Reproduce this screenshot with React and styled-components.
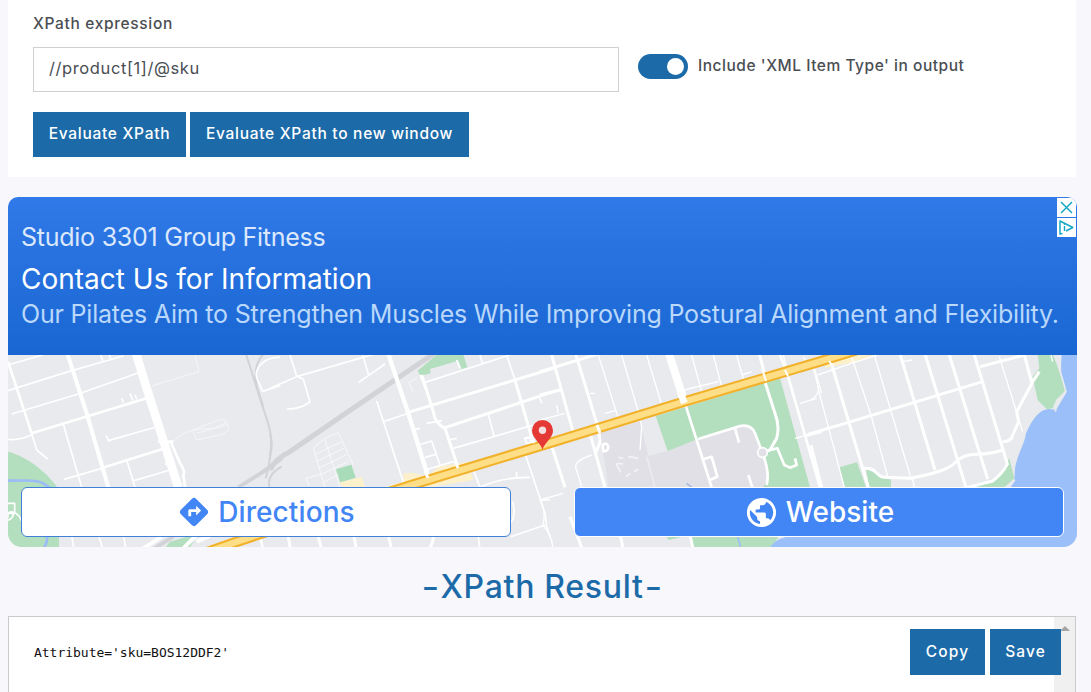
import React from "react";
import styled, { createGlobalStyle } from "styled-components";
import { MdDirections, MdPublic } from "react-icons/md";

const GlobalStyle = createGlobalStyle`
  * { box-sizing: border-box; }
  html, body { margin: 0; height: 692px; overflow: hidden; }
  body { background: #f7f7fc; font-family: Inter, "Liberation Sans", sans-serif; }
`;

const Page = styled.main`
  height: 692px;
  padding: 0 15px 0 8px;
  overflow: hidden;
`;

const FormCard = styled.section`
  height: 177px;
  padding: 12px 25px 0;
  background: #fff;
`;

const Label = styled.label`
  display: block;
  height: 24px;
  font-size: 15.5px;
  font-weight: 500;
  line-height: 24px;
  color: #4a4e53;
  white-space: nowrap;
  letter-spacing: ${(p) => p.$track || "0"};
`;

const FieldRow = styled.div`
  display: flex;
  margin-top: 11px;
`;

const Input = styled.input`
  width: 586px;
  height: 45px;
  padding: 0 15px 3px;
  border: 1px solid #cfd0d2;
  border-radius: 0;
  background: #fff;
  color: #4a4e53;
  font: 400 16.5px Inter, "Liberation Sans", sans-serif;
  letter-spacing: 0.6px;
  outline: none;
`;

const ToggleField = styled.div`
  display: flex;
  gap: 10px;
  margin: 7px 0 0 19px;
`;

const Toggle = styled.span`
  display: flex;
  justify-content: flex-end;
  align-items: center;
  width: 50px;
  height: 25px;
  padding-right: 4px;
  border-radius: 13px;
  background: #1c6ba8;
`;

const Knob = styled.span`
  width: 17px;
  height: 17px;
  border-radius: 50%;
  background: #fff;
`;

const ButtonRow = styled.div`
  display: flex;
  gap: 4px;
  margin-top: 20px;
`;

const Button = styled.button`
  width: ${(p) => p.$w}px;
  height: ${(p) => p.$h || 45}px;
  padding: 0 0 2px;
  border: 0;
  background: #1c6ba8;
  color: #fff;
  font: 500 15.5px Inter, "Liberation Sans", sans-serif;
  letter-spacing: ${(p) => p.$track || "0.72px"};
  white-space: nowrap;
`;

const Ad = styled.section`
  position: relative;
  width: 1069px;
  height: 350px;
  margin-top: 20px;
  border-radius: 10px 10px 14px 14px;
  overflow: hidden;
`;

const AdCopy = styled.div`
  height: 158px;
  padding: 23px 13px 0;
  background: linear-gradient(#3079e8, #1966d2);
  white-space: nowrap;
`;

const Advertiser = styled.div`
  font-size: 25px;
  line-height: 34px;
  color: #dce8fb;
  letter-spacing: -0.25px;
`;

const AdTitle = styled.div`
  margin-top: 5px;
  font-size: 28px;
  line-height: 40px;
  color: #fff;
`;

const AdText = styled.div`
  margin-top: -1px;
  font-size: 25px;
  line-height: 32px;
  color: #b9d8fb;
  letter-spacing: -0.2px;
`;

const AdBadges = styled.div`
  position: absolute;
  top: 1px;
  right: 1px;
  display: flex;
  flex-direction: column;
  gap: 1px;
`;

const Badge = styled.span`
  display: flex;
  width: 19px;
  height: 19px;
  background: #fff;
`;

const MapArea = styled.div`
  position: relative;
  height: 192px;
  overflow: hidden;
`;

const MapSvg = styled.svg`
  display: block;
  width: 1069px;
  height: 192px;
`;

const AdActions = styled.div`
  position: absolute;
  top: 132px;
  left: 13px;
  right: 13px;
  display: flex;
  justify-content: space-between;
`;

const AdLink = styled.a`
  display: flex;
  align-items: center;
  justify-content: center;
  gap: ${(p) => p.$gap}px;
  width: 490px;
  height: 50px;
  border: 1px solid ${(p) => (p.$solid ? "#fff" : "#4180d8")};
  border-radius: 6px;
  background: ${(p) => (p.$solid ? "#4285f4" : "#fff")};
  color: ${(p) => (p.$solid ? "#fff" : "#4285f4")};
  font-size: 28px;
  font-weight: 500;
  letter-spacing: ${(p) => p.$track};
`;

const ResultTitle = styled.h2`
  height: 69px;
  margin: 0;
  padding-top: 19px;
  text-align: center;
  font-size: 32px;
  font-weight: 500;
  line-height: 42px;
  color: #1c6ba8;
  letter-spacing: 0.7px;
`;

const Dash = styled.span`
  display: inline-block;
  margin: 0 2px;
  transform: scaleX(1.2);
`;

const ResultBox = styled.section`
  position: relative;
  display: flex;
  justify-content: space-between;
  height: 120px;
  border: 1px solid #c9c9ce;
  background: #fff;
`;

const Output = styled.pre`
  margin: 0;
  padding: 27px 25px;
  font: 13px/18px "DejaVu Sans Mono", monospace;
  letter-spacing: -0.02px;
  color: #111;
`;

const ScrollTrack = styled.div`
  width: 21px;
  padding: 9px 0 0 6px;
  background: #f0f0f0;
`;

const ScrollArrow = styled.span`
  display: block;
  width: 0;
  border: solid transparent;
  border-width: 0 5px 5px;
  border-bottom-color: #a3a3a3;
`;

const ResultActions = styled.div`
  position: absolute;
  top: 12px;
  right: 14px;
  display: flex;
  gap: 5px;
`;

/* The map is authored in four sheets at triple scale, placed side by side. */
const SHEETS = [
  {
    x: 0,
    areas: [
      ["#b4dfbf", "M24 305C85 320 150 375 177 420V600H24Z"],
      ["#b4dfbf", "M490 600L510 575 560 560 590 560 565 600Z"],
    ],
    lines: [
      ["#9bbcf5", 8, "M24 391C60 394 110 386 130 400L165 425M142 555Q143 580 128 600"],
      ["#d2d3d7", 6, "M738 12L780 145C800 210 820 250 812 300Q810 340 797 385M790 12Q755 50 772 115L790 170"],
      ["#d2d3d7", 12, "M715 412L790 365 845 325M455 600L520 560"],
      ["#d2d3d7", 6, "M845 350Q800 375 808 412"],
      ["#f5f6f7", 3, "M585 15L597 65 455 108M520 275Q540 250 575 242L650 212Q685 200 685 235 680 250 660 255L590 270 578 240 640 235 680 218M590 250L680 225"],
      ["#fff", 5, "M24 122L205 65 370 18M24 45L130 14M35 192L235 132 420 67M302 14L308 32M328 14L332 27M365 145L370 158M390 130L398 151M405 134L410 148M318 256L328 276M325 272L468 231M190 223L245 412M192 388L305 355M380 330L405 412M402 392L510 360M95 250L110 300 143 327M24 268Q55 272 95 255M840 22C790 20 755 60 775 95L788 124 840 107M215 555L222 600M295 555L310 600M370 555L378 600"],
      ["#fff", 8, "M24 35L95 250 440 145M308 353L495 295M475 275L520 275M495 342L520 342M512 275L540 340Q557 365 550 375L555 412"],
      ["#fff", 12, "M203 14L260 190 325 412M430 595L485 560M545 600L590 555M590 575L630 557"],
      ["#fff", 26, "M408 10L440 115 535 412"],
      ["#fff", 5, "M24 460H44V490H24M24 505Q20 480 42 487 60 495 65 515M24 511Q40 505 40 490"],
      ["#fff", 7, "M780 560L790 600"],
    ],
  },
  {
    x: 270,
    areas: [
      ["#b4dfbf", "M443 62L500 14H580L592 52 575 57 565 32 480 57 482 70 452 78Z"],
      ["#a8dcb9", "M198 358L244 344 257 383 211 398Z"],
      ["#fcf1cb", "M210 397L275 380 285 412H215ZM400 370L430 368 470 380 505 350 595 335 610 390 480 412 340 412 400 395Z"],
    ],
    lines: [
      ["#d2d3d7", 15, "M490 12L230 188 60 305Q15 325 0 360"],
      ["#d2d3d7", 6, "M0 250Q10 285 0 318"],
      ["#fff", 5, "M0 115L80 80 355 0M60 15L80 78 100 88 120 156Q90 178 50 177M278 15L296 75M265 98L345 42M320 153L405 412M340 215L415 190M435 238L450 235M445 285L485 273 510 345M465 322L498 313M465 97L720 15M450 75L475 135 482 165M470 220L515 212M535 270L560 265M550 295L790 225M655 193L672 258M710 15L735 90M465 360L550 335M630 15L637 40M560 30L570 55M810 145L815 160M610 360L630 412M765 310L825 490 830 530 840 560M630 412Q700 380 780 382M740 365V385M722 560L825 525M625 560L630 600M815 450H840M728 455Q740 500 720 520"],
      ["#f8f8f9", 3, "M130 295Q165 260 205 248M130 295L165 412M165 270L210 412M205 248L250 345M132 315L215 275M138 335L222 295M145 355L228 315M150 375L235 335M108 385L155 372M108 385L118 408M155 400L205 375M415 95L430 125M440 85L420 95"],
      ["#fff", 9, "M415 187L735 90 850 55M455 75L490 185Q495 220 525 235L565 355M525 233L760 155 850 125M735 90L790 280"],
      ["#fff", 13, "M355 12L415 190 475 383"],
      ["#fff", 9, "M55 560L62 600M145 560L155 600M252 560L260 600M355 555L365 600M490 560Q490 580 475 600"],
      ["#fff", 6, "M765 265L780 262 785 278 770 280Z"],
    ],
  },
  {
    x: 540,
    areas: [
      ["#e1e0e6", "M180 245L300 215 325 318 380 303 470 270 610 230 640 240 690 350 670 412H205Z"],
      ["#b4dfbf", "M347 198L720 84 810 412H670L685 380 665 310 635 235 610 228 475 267 383 303Z"],
      ["#b4dfbf", "M380 560H420L425 561 385 570ZM450 555H720L690 600H460Z"],
      ["#9bbff9", "M685 600Q705 560 760 558H850V600Z"],
    ],
    lines: [
      ["#eeeef1", 4, "M320 320L345 412"],
      ["#f3f3f6", 5, "M235 322L250 325M228 340L242 367M232 340L250 342M265 320L295 325M258 380L270 370M282 365L295 358"],
      ["#fff", 4, "M155 315Q95 335 110 360L125 410M0 450L70 430M0 450Q20 490 8 525 40 560 38 600M0 210L75 190M50 165L55 190M195 190L225 182M150 130H165M175 15L235 205M245 15L295 185 305 230 300 300M320 15L365 165M455 15L487 133M520 15L545 110M432 120L535 95M590 15L612 95M605 75L635 65M730 15L740 55M790 20L805 45M820 45L845 130M780 160L830 145M765 265L790 258"],
      ["#fff", 9, "M0 65L180 10M0 135L60 120M35 15L100 248M108 15L175 235M175 235L180 275 165 315M658 12L675 75M670 80L705 190Q720 230 710 265L690 300 665 308M150 250L195 412M35 288L75 412M90 500L128 600M240 550L250 600M450 555L460 600"],
      ["#fff", 8, "M435 160L515 412M475 267L600 228Q635 222 645 250L668 310M668 310Q690 370 680 405M585 235L597 278M625 375L637 412M490 328L515 320 532 380 510 390M690 300L712 295 733 345 750 353 770 345 765 325M188 285Q200 275 205 290 205 305 190 304ZM740 65L840 412M720 15L740 65"],
      ["#fff", 24, "M385 5L433 155"],
      ["#9bbff9", 5, "M593 560L602 590"],
      ["#a9bcd8", 5, "M440 400L455 412"],
      ["#fff", 8, "M795 258L845 245"],
    ],
  },
  {
    x: 811,
    areas: [
      ["#fcf1cb", "M60 15H200L120 38 40 55Z"],
      ["#9bbff9", "M752 10H800V600H0V560H500L610 395 612 355C620 310 640 285 645 250C665 205 685 178 715 177L735 180 765 130 748 70Z"],
      ["#b4dfbf", "M680 10H725L765 120 735 150 725 175 708 178 680 150 665 80 685 55Z"],
      ["#b4dfbf", "M85 352L138 337 165 412H102ZM165 357L240 390V412H175ZM495 412L560 380 595 325 610 385 580 412Z"],
    ],
    lines: [
      ["#fff", 4, "M0 150Q30 130 20 105L8 55M20 75L120 40 200 15M20 110L100 412M120 15L180 195 230 380M190 15L300 385M275 35L303 30M565 20L635 245M720 15L725 35M303 380L310 412"],
      ["#fff", 9, "M-10 253L110 218 515 95M58 30L172 412M0 285L32 412M268 15L372 360M343 15L465 412M415 15L530 387M490 15L590 345M508 50L640 15M155 355C200 350 195 382 220 382L300 385C340 375 415 365 440 330C485 300 500 325 575 300M590 340Q575 370 545 393L470 412M575 275Q602 275 605 255L623 215 617 185 663 100 640 15M665 95L685 65"],
      ["#e8eaed", 5, "M748 12L748 65 765 125 740 152 733 185M612 390L590 412"],
    ],
  },
];

const HIGHWAY = "M190 558L236 542Q330 511 410 485.500L537 447 683 402 820 361.500 870 346";

function StreetMap() {
  const at = (x) => `translate(${x} 350) scale(0.33333)`;
  return (
    <MapSvg viewBox="8 355 1069 192" aria-hidden="true">
      <rect x="8" y="355" width="1069" height="192" fill="#e8eaed" />
      {SHEETS.map((s) => (
        <g key={s.x} transform={at(s.x)}>
          {s.areas.map(([fill, d]) => <path key={d} d={d} fill={fill} />)}
        </g>
      ))}
      {SHEETS.map((s) => (
        <g key={s.x} transform={at(s.x)} fill="none" strokeLinejoin="round">
          {s.lines.map(([stroke, w, d]) => <path key={d} d={d} stroke={stroke} strokeWidth={w} />)}
        </g>
      ))}
      <g fill="none">
        <path d={HIGHWAY} stroke="#f2b12b" strokeWidth="10.400" />
        <path d={HIGHWAY} stroke="#fedf87" strokeWidth="6.200" />
      </g>
      <g stroke="#fff" fill="none">
        <path d="M680 392L684.500 403" strokeWidth="7" />
        <path d="M425 471L428 478M455 461L458 468M531 435L534 443M597 425L600 433" strokeWidth="3" />
        <path d="M762 369L766 381M785 370L788 376M829 361L832 365" strokeWidth="2" />
      </g>
      <circle cx="762.500" cy="452.500" r="4.800" fill="#e1e0e6" stroke="#fff" strokeWidth="1.700" />
      <path d="M542.500 449.500C540 442 532 438 532 430.500A10.500 10.500 0 0 1 553 430.500C553 438 545 442 542.500 449.500Z" fill="#e53935" />
      <circle cx="542.500" cy="430.300" r="3.700" fill="#f5dedd" />
    </MapSvg>
  );
}

export default function App() {
  return (
    <>
      <GlobalStyle />
      <Page>
        <FormCard>
          <Label htmlFor="xpath" $track="0.66px">XPath expression</Label>
          <FieldRow>
            <Input id="xpath" defaultValue="//product[1]/@sku" />
            <ToggleField>
              <Toggle role="switch" aria-checked="true"><Knob /></Toggle>
              <Label as="span" $track="0.53px">Include 'XML Item Type' in output</Label>
            </ToggleField>
          </FieldRow>
          <ButtonRow>
            <Button $w={153}>Evaluate XPath</Button>
            <Button $w={279}>Evaluate XPath to new window</Button>
          </ButtonRow>
        </FormCard>

        <Ad>
          <AdCopy>
            <Advertiser>Studio 3301 Group Fitness</Advertiser>
            <AdTitle>Contact Us for Information</AdTitle>
            <AdText>
              Our Pilates Aim to Strengthen Muscles While Improving Postural Alignment and Flexibility.
            </AdText>
          </AdCopy>
          <MapArea>
            <StreetMap />
            <AdActions>
              <AdLink $gap={7} $track="0.1px"><MdDirections size={34} />Directions</AdLink>
              <AdLink $solid $gap={7} $track="0px"><MdPublic size={35} />Website</AdLink>
            </AdActions>
          </MapArea>
          <AdBadges>
            <Badge>
              <svg width="19" height="19" viewBox="0 0 19 19">
                <path d="M4 4L15 15M15 4L4 15" stroke="#16a9c5" strokeWidth="1.500" />
              </svg>
            </Badge>
            <Badge>
              <svg width="19" height="19" viewBox="0 0 19 19" fill="none" stroke="#16a9c5" strokeWidth="1.500" strokeLinejoin="round">
                <path d="M5.500 15.500L3 16V3L15.800 9.500 9 13" />
                <path d="M7.500 8V13M7.500 5.500V6.700" />
              </svg>
            </Badge>
          </AdBadges>
        </Ad>

        <ResultTitle><Dash>-</Dash>XPath Result<Dash>-</Dash></ResultTitle>
        <ResultBox>
          <Output>Attribute='sku=BOS12DDF2'</Output>
          <ScrollTrack><ScrollArrow /></ScrollTrack>
          <ResultActions>
            <Button $w={75} $h={46} $track="1.2px">Copy</Button>
            <Button $w={71} $h={46} $track="1.1px">Save</Button>
          </ResultActions>
        </ResultBox>
      </Page>
    </>
  );
}
